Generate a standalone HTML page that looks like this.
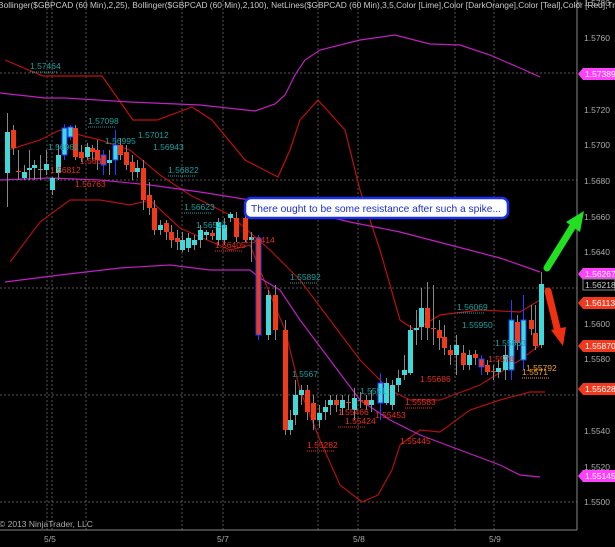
<!DOCTYPE html>
<html><head><meta charset="utf-8"><style>
html,body{margin:0;padding:0;background:#000;}
svg{display:block;}
text{font-family:"Liberation Sans",sans-serif;}
</style></head><body>
<svg id="c" width="615" height="547" viewBox="0 0 615 547" xmlns="http://www.w3.org/2000/svg">
<rect width="615" height="547" fill="#000"/>
<g stroke="#555" stroke-width="1" stroke-dasharray="2,2">
<line x1="47" y1="0" x2="47" y2="530"/><line x1="52" y1="0" x2="52" y2="530"/><line x1="86" y1="0" x2="86" y2="530"/>
<line x1="182" y1="0" x2="182" y2="530"/><line x1="223" y1="0" x2="223" y2="530"/><line x1="318" y1="0" x2="318" y2="530"/>
<line x1="358" y1="0" x2="358" y2="530"/><line x1="455" y1="0" x2="455" y2="530"/><line x1="494" y1="0" x2="494" y2="530"/>
<line x1="0" y1="73" x2="577" y2="73"/><line x1="0" y1="180" x2="577" y2="180"/><line x1="0" y1="288" x2="577" y2="288"/>
<line x1="0" y1="395" x2="577" y2="395"/><line x1="0" y1="502" x2="577" y2="502"/>
</g>
<line x1="577" y1="0" x2="577" y2="530" stroke="#888"/>
<line x1="0" y1="530" x2="577" y2="530" stroke="#888"/>
<g fill="none" stroke-width="1.2">
<polyline stroke="#c01010" points="5,60 43,76 102,76 133,120 157,120 192,107 212,120 245,160 278,177 290,150 300,120 318,100 345,130 360,190 380,250 400,320 415,330 440,315 480,310 520,312 540,300"/>
<polyline stroke="#b01010" points="8,150 40,140 60,130 100,140 130,150 160,175 190,195 230,215 270,250 300,280 330,320 360,360 390,390 410,400 440,400 480,385 520,360 540,345"/>
<polyline stroke="#b01010" points="10,262 40,222 70,200 100,200 130,205 150,200 180,228 230,250 250,245 260,270 285,330 300,390 320,440 340,485 362,502 378,495 392,470 400,445 420,430 440,432 470,410 500,400 530,392 545,392"/>
<polyline stroke="#c020c0" points="0,93 45,98 65,98 130,102 200,105 255,111 275,104 285,95 295,75 305,60 320,50 360,40 395,35 430,44 460,45 490,55 520,68 540,77"/>
<polyline stroke="#c020c0" points="0,180 50,178 100,180 150,185 200,192 250,200 300,210 350,222 400,232 450,245 500,258 540,272"/>
<polyline stroke="#c020c0" points="5,282 60,275 120,268 170,265 210,270 250,270 260,278 280,290 300,320 330,360 360,400 390,420 420,435 460,450 500,465 520,475 540,477"/>
</g>
<g id="cd"></g>
<g font-size="8.5" fill="#1aa0a0">
<text x="30" y="69">1.57464</text><text x="88" y="124">1.57098</text><text x="48" y="150">1.56962</text>
<text x="105" y="144">1.56995</text><text x="138" y="138">1.57012</text><text x="153" y="150">1.56943</text>
<text x="168" y="173">1.56822</text><text x="184" y="210">1.56623</text><text x="196" y="228">1.56535</text>
<text x="290" y="280">1.55892</text><text x="292" y="377">1.5567</text><text x="360" y="394">1.5551</text>
<text x="457" y="310">1.56069</text><text x="462" y="328">1.55950</text><text x="495" y="346">1.55863</text>
</g>
<g stroke="#1aa0a0" stroke-dasharray="1,1"><line x1="30" y1="72" x2="58" y2="72"/><line x1="88" y1="127" x2="116" y2="127"/><line x1="168" y1="176" x2="196" y2="176"/><line x1="184" y1="213" x2="212" y2="213"/><line x1="290" y1="283" x2="318" y2="283"/><line x1="457" y1="313" x2="485" y2="313"/></g>
<g font-size="8.5" fill="#e83020">
<text x="50" y="173">1.56812</text><text x="75" y="187">1.56763</text><text x="80" y="164">1.5682</text>
<text x="215" y="248">1.56405</text><text x="244" y="243">1.56414</text><text x="307" y="448">1.55282</text>
<text x="338" y="415">1.55466</text><text x="345" y="424">1.55424</text><text x="375" y="418">1.55453</text>
<text x="405" y="405">1.55583</text><text x="400" y="444">1.55445</text><text x="420" y="382">1.55686</text><text x="488" y="362">1.5578</text>
</g>
<g stroke="#e83020" stroke-dasharray="1,1"><line x1="307" y1="451" x2="335" y2="451"/><line x1="215" y1="251" x2="243" y2="251"/><line x1="338" y1="427" x2="366" y2="427"/><line x1="405" y1="408" x2="433" y2="408"/></g>
<g font-size="8.5" fill="#f0a020"><text x="526" y="371">1.55792</text><text x="522" y="375">1.5571</text></g>
<line x1="522" y1="378" x2="550" y2="378" stroke="#f0a020" stroke-dasharray="1,1"/>
<rect x="245" y="198" width="263" height="20" rx="6" fill="#fff" stroke="#1a30f0" stroke-width="2.5"/>
<text x="251" y="212" font-size="10.5" fill="#1a30d0" textLength="250" lengthAdjust="spacingAndGlyphs">There ought to be some resistance after such a spike...</text>
<path d="M547,268 L573,226" stroke="#20e020" stroke-width="7" stroke-linecap="round"/>
<polygon points="584,211 566,222 580,232" fill="#20e020"/>
<path d="M548,291 L558,332" stroke="#f03010" stroke-width="7" stroke-linecap="round"/>
<polygon points="563,346 551,330 566,327" fill="#f03010"/>
<text x="-2" y="8" font-size="8.5" fill="#c8c8c8" textLength="617" lengthAdjust="spacingAndGlyphs">Bollinger($GBPCAD (60 Min),2,25), Bollinger($GBPCAD (60 Min),2,100), NetLines($GBPCAD (60 Min),3,5,Color [Lime],Color [DarkOrange],Color [Teal],Color [Red],Tr</text>
<g font-size="8.5" fill="#aaa">
<line x1="577" x2="581" y1="3" y2="3" stroke="#888"/><text x="584" y="6">1.5780</text>
<text x="584" y="41">1.5760</text><text x="584" y="113">1.5720</text><text x="584" y="148">1.5700</text>
<text x="584" y="184">1.5680</text><text x="584" y="220">1.5660</text><text x="584" y="255">1.5640</text>
<text x="584" y="327">1.5600</text><text x="584" y="362">1.5580</text><text x="584" y="434">1.5540</text>
<text x="584" y="470">1.5520</text><text x="584" y="505">1.5500</text>
<text x="44" y="542">5/5</text><text x="217" y="542">5/7</text><text x="353" y="542">5/8</text><text x="489" y="542">5/9</text>
<text x="-1" y="527">© 2013 NinjaTrader, LLC</text>
</g>
<g font-size="8.5">
<polygon points="578,74 583,68 615,68 615,80 583,80" fill="#ff40ff"/><text x="585" y="77" fill="#fff">1.57389</text>
<polygon points="578,274 583,268 615,268 615,280 583,280" fill="#ff40ff"/><text x="585" y="277" fill="#fff">1.56267</text>
<rect x="583" y="279" width="32" height="11" fill="#000" stroke="#888"/><text x="585" y="288" fill="#ccc">1.56218</text>
<polygon points="578,303 583,297 615,297 615,309 583,309" fill="#f03a20"/><text x="585" y="306" fill="#fff">1.56113</text>
<polygon points="578,346 583,340 615,340 615,352 583,352" fill="#f03a20"/><text x="585" y="349" fill="#fff">1.55870</text>
<polygon points="578,389 583,383 615,383 615,395 583,395" fill="#f03a20"/><text x="585" y="392" fill="#fff">1.55628</text>
<polygon points="578,476 583,470 615,470 615,482 583,482" fill="#ff40ff"/><text x="585" y="479" fill="#fff">1.55145</text>
</g>
</svg>
<script>
var d=[[7,173,132,113,207],[13,130,148,125,155],[18,171,172,150,180],[24,178,172,165,180],[29,170,168,150,180],[34,168,165,160,180],[40,169,169,155,180],[46,170,164,150,175],[52,190,178,177,195],[58,173,155,145,180],[64,155,128,124,160,1],[70,137,127,125,140,1],[75,128,157,125,160],[81,152,158,145,162],[87,157,147,143,160],[92,148,152,145,160],[97,150,160,140,170],[103,155,165,150,175,1],[109,163,160,150,175],[115,160,145,130,175,1],[120,145,155,138,160],[126,152,165,145,170],[132,162,172,155,180],[137,172,168,160,178],[143,168,200,160,210],[149,195,208,182,215],[154,208,230,200,235],[160,230,225,220,235],[166,223,232,220,240],[171,232,240,225,248],[177,238,242,230,250],[182,250,240,232,252],[188,248,238,233,252],[194,245,240,235,250],[200,240,230,225,248],[206,235,232,230,240],[212,233,236,230,240],[218,240,222,218,245],[224,240,225,218,245],[230,218,214,212,222],[236,218,237,212,242],[245,218,240,212,242],[251,240,237,232,262],[258,238,335,235,340,1],[268,335,295,290,340],[275,295,330,285,340],[285,330,430,320,435],[290,430,420,410,435],[295,415,395,380,425],[301,395,390,385,405],[307,390,412,385,420],[313,403,420,395,430],[319,420,413,405,428],[325,412,407,400,420],[330,405,400,395,415],[336,400,405,395,412],[342,408,400,395,415],[348,402,403,395,410],[354,410,398,388,420],[360,400,401,392,408],[366,400,405,395,410],[371,405,400,390,412],[380,403,383,373,420,1],[386,403,383,378,405],[392,405,385,380,410],[398,385,378,370,392],[404,375,370,355,380],[410,373,330,325,375],[416,330,328,310,345],[421,327,308,288,340],[427,308,328,282,340],[433,328,329,285,345],[439,330,338,320,350],[444,337,348,325,355],[450,350,355,345,365],[456,355,345,335,375],[463,353,365,345,370],[469,365,355,350,370],[475,354,358,350,365],[481,359,367,355,375,1],[487,365,372,360,375],[493,371,372,365,380],[498,372,368,360,378],[505,370,355,345,380],[511,370,320,300,380,1],[517,322,343,315,350],[523,360,320,295,370,1],[531,320,329,305,335],[535,333,346,305,350],[541,345,284,272,348]];
var g=document.getElementById('cd'),s='';
d.forEach(function(c){var x=c[0],o=c[1],cl=c[2],h=c[3],l=c[4],up=cl<o,t=Math.min(o,cl),b=Math.max(Math.abs(o-cl),1);
s+='<line x1="'+(x+0.5)+'" x2="'+(x+0.5)+'" y1="'+h+'" y2="'+l+'" stroke="'+(c[5]?'#2040ff':'#888')+'"/>';
s+='<rect x="'+(x-2)+'" y="'+t+'" width="5" height="'+b+'" fill="'+(o==cl?'#888':(up?'#40d8d8':'#f03a1a'))+'"'+(c[5]?' stroke="#2040ff" stroke-width="1"':'')+'/>';});
g.innerHTML=s;
</script>
</body></html>
